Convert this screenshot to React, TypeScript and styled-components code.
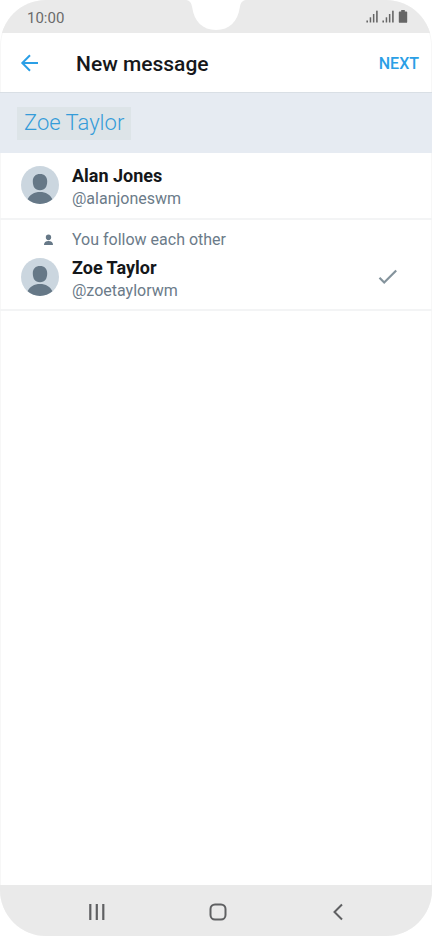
import React, { useState } from "react";
import styled, { createGlobalStyle } from "styled-components";

const GlobalStyle = createGlobalStyle`
  *, *::before, *::after { box-sizing: border-box; }
  body { margin: 0; background: #fff; font-family: Roboto, "Noto Sans", sans-serif; }
  button, input { font: inherit; color: inherit; margin: 0; padding: 0; border: 0; background: none; }
  button { cursor: pointer; }
  svg { display: block; }
  h1, p { margin: 0; }
`;

const Screen = styled.div`
  display: flex;
  flex-direction: column;
  min-height: 100vh;
  overflow: hidden;
  border-radius: 46px;
  background: #fff;
  box-shadow: inset 0 0 0 1px #f7f7f7;
`;

const StatusBar = styled.div`
  position: relative;
  display: flex;
  align-items: center;
  justify-content: space-between;
  height: 33px;
  padding: 0 24px 0 27px;
  background: #eaeaea;
  color: #6b6b6b;
  font-size: 15px;
  line-height: 20px;
`;

const Clock = styled.time`
  padding-top: 2px;
`;

const Notch = styled.svg`
  position: absolute;
  top: 0;
  left: 50%;
  margin-left: -30px;
`;

const StatusIcons = styled.div`
  display: flex;
  align-items: flex-end;
  gap: 4px;
`;

const AppBar = styled.header`
  display: flex;
  align-items: center;
  height: 60px;
  padding: 0 13px 0 16px;
  border-bottom: 1px solid #d9dfe5;
`;

const BackButton = styled.button`
  display: grid;
  place-items: center;
  width: 28px;
  height: 28px;
  color: #2b9fe6;
`;

const Title = styled.h1`
  flex: 1;
  margin-left: 32px;
  padding-top: 2px;
  color: #16181b;
  font-size: 21px;
  line-height: 28px;
  font-weight: 500;
`;

const NextButton = styled.button`
  padding-top: 2px;
  color: #2b9fe6;
  font-size: 16px;
  line-height: 24px;
  font-weight: 500;
`;

const Recipients = styled.div`
  display: flex;
  align-items: center;
  gap: 8px;
  height: 60px;
  padding: 0 17px;
  background: #e6ebf2;
`;

const Chip = styled.button`
  height: 33px;
  padding: 0 7px;
  background: #dde4e8;
  color: #359cd9;
  font-size: 22px;
  line-height: 30px;
  font-weight: 300;
`;

const RecipientInput = styled.input`
  flex: 1;
  min-width: 0;
  height: 33px;
  outline: none;
`;

const People = styled.ul`
  flex: 1;
  margin: 0;
  padding: 0;
  list-style: none;
`;

const PersonItem = styled.li`
  border-bottom: 2px solid #f3f4f5;
`;

const Relation = styled.p`
  display: flex;
  align-items: center;
  gap: 18px;
  padding: 9px 0 0 43px;
  color: #6b7b89;
  font-size: 16px;
  line-height: 22px;
`;

const PersonButton = styled.button<{ $compact: boolean }>`
  display: flex;
  align-items: center;
  gap: 12px;
  width: 100%;
  padding: ${(p) => (p.$compact ? "1px 34px 7px 20px" : "7px 34px 8px 20px")};
  text-align: left;
`;

const PersonText = styled.span`
  display: flex;
  flex: 1;
  flex-direction: column;
  padding-top: 4px;
`;

const Name = styled.span`
  color: #14171a;
  font-size: 18px;
  line-height: 24px;
  font-weight: 700;
`;

const Handle = styled.span`
  color: #6b7b89;
  font-size: 16px;
  line-height: 22px;
`;

const NavBar = styled.nav`
  display: flex;
  align-items: center;
  justify-content: space-between;
  height: 51px;
  padding: 2px 79px 0 82px;
  background: #eaeaea;
  color: #5f6062;
`;

const NavButton = styled.button`
  display: grid;
  place-items: center;
  width: 30px;
  height: 40px;
`;

const Signal = () => (
  <svg width="12" height="13" viewBox="0 0 12 13" fill="#666" aria-hidden="true">
    <rect x="0.4" y="10.5" width="1.6" height="2" />
    <rect x="3.7" y="7.3" width="1.5" height="5.2" />
    <rect x="6.9" y="4" width="1.5" height="8.5" />
    <rect x="10.1" y="0.7" width="1.6" height="11.8" />
  </svg>
);

const Battery = () => (
  <svg width="10" height="13" viewBox="0 0 10 13" fill="#666" aria-hidden="true">
    <path d="M3.2 0h3.6v1.4H8.3Q9.2 1.4 9.2 2.3v9.6q0 .9-.9.9H1.7q-.9 0-.9-.9V2.3q0-.9.9-.9h1.5z" />
  </svg>
);

const Avatar = () => (
  <svg width="40" height="40" viewBox="0 0 40 40" aria-hidden="true">
    <circle cx="20" cy="20" r="19" fill="#cbd6df" />
    <path
      d="M20 9c4.4 0 7.2 2.7 7.2 7.3 0 5.200-2 9-7.200 9s-7.200-3.800-7.200-9C12.800 11.700 15.600 9 20 9zM7.600 34.300C9.500 29.600 14.300 27 20 27s10.500 2.600 12.400 7.300A19 19 0 0 1 7.600 34.300z"
      fill="#667887"
    />
  </svg>
);

const PersonIcon = () => (
  <svg width="11" height="12" viewBox="0 0 11 12" fill="#667887" aria-hidden="true">
    <path d="M5.500 .5c1.700 0 2.700 1.100 2.700 2.700S7.200 6.200 5.500 6.200 2.800 4.800 2.800 3.200 3.800.5 5.500.5zM1 11C1 8.300 2.500 6.900 5.500 6.900S10 8.300 10 11z" />
  </svg>
);

const Check = () => (
  <svg width="20" height="18" viewBox="0 0 20 18" fill="none" stroke="#84939c" strokeWidth="2.200" aria-hidden="true">
    <path d="M1.500 9.800 6.200 14.500 18.200 2.500" />
  </svg>
);

type Person = { name: string; handle: string; relation?: string };

const people: Person[] = [
  { name: "Alan Jones", handle: "@alanjoneswm" },
  { name: "Zoe Taylor", handle: "@zoetaylorwm", relation: "You follow each other" },
];

export default function App() {
  const [selected, setSelected] = useState<string | null>("Zoe Taylor");
  const [query, setQuery] = useState("");

  return (
    <>
      <GlobalStyle />
      <Screen>
        <StatusBar>
          <Clock>10:00</Clock>
          <Notch width="60" height="33" viewBox="0 0 60 33" fill="#fff" aria-hidden="true">
            <path d="M0 0C4 .6 5.500 3 6.200 7.500 8.300 21.500 16.500 30 30 30S51.700 21.500 53.800 7.500C54.500 3 56 .6 60 0z" />
          </Notch>
          <StatusIcons>
            <Signal />
            <Signal />
            <Battery />
          </StatusIcons>
        </StatusBar>
        <AppBar>
          <BackButton aria-label="Back">
            <svg width="20" height="18" viewBox="0 0 20 18" fill="none" stroke="currentColor" strokeWidth="2" aria-hidden="true">
              <path d="M18 9H2.500M10 1.300 2.300 9l7.700 7.700" />
            </svg>
          </BackButton>
          <Title>New message</Title>
          <NextButton>NEXT</NextButton>
        </AppBar>
        <Recipients>
          {selected && <Chip onClick={() => setSelected(null)}>{selected}</Chip>}
          <RecipientInput aria-label="Search people" value={query} onChange={(e) => setQuery(e.target.value)} />
        </Recipients>
        <People>
          {people.map((p) => (
            <PersonItem key={p.handle}>
              {p.relation && (
                <Relation>
                  <PersonIcon />
                  {p.relation}
                </Relation>
              )}
              <PersonButton
                $compact={!!p.relation}
                aria-pressed={selected === p.name}
                onClick={() => setSelected(selected === p.name ? null : p.name)}
              >
                <Avatar />
                <PersonText>
                  <Name>{p.name}</Name>
                  <Handle>{p.handle}</Handle>
                </PersonText>
                {selected === p.name && <Check />}
              </PersonButton>
            </PersonItem>
          ))}
        </People>
        <NavBar>
          <NavButton aria-label="Recent apps">
            <svg width="18" height="18" viewBox="0 0 18 18" fill="none" stroke="currentColor" strokeWidth="2.200" aria-hidden="true">
              <path d="M2.300 1v16M8.800 1v16M15.300 1v16" />
            </svg>
          </NavButton>
          <NavButton aria-label="Home">
            <svg width="18" height="18" viewBox="0 0 18 18" fill="none" stroke="currentColor" strokeWidth="2" aria-hidden="true">
              <rect x="1.500" y="1.500" width="15" height="15" rx="4.500" />
            </svg>
          </NavButton>
          <NavButton aria-label="Back">
            <svg width="12" height="18" viewBox="0 0 12 18" fill="none" stroke="currentColor" strokeWidth="2" aria-hidden="true">
              <path d="M10 1.500 2.500 9l7.500 7.500" />
            </svg>
          </NavButton>
        </NavBar>
      </Screen>
    </>
  );
}
